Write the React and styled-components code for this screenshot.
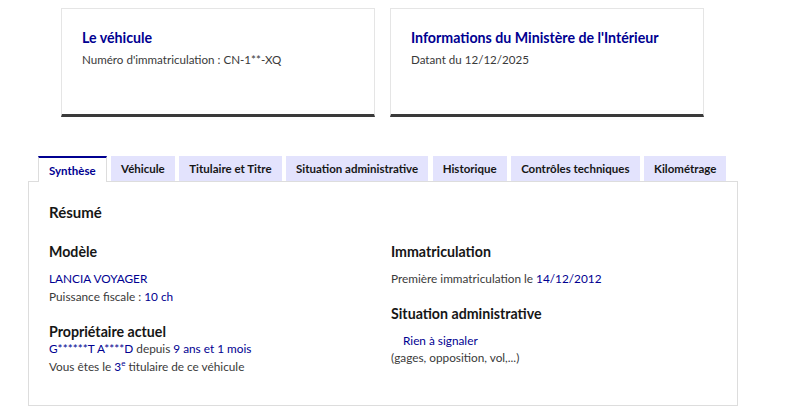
import React from "react";
import styled, { createGlobalStyle } from "styled-components";

const Global = createGlobalStyle`
  html, body { margin: 0; padding: 0; background: #fff; }
  body { font-family: Lato, "Noto Sans", Arial, sans-serif; color: #3a3a3a; }
  * { box-sizing: border-box; }
`;

const Page = styled.div`
  width: 800px;
  height: 415px;
  overflow: hidden;
  padding-top: 8px;
`;

const Cards = styled.div`
  display: flex;
  gap: 15px;
  margin-left: 61px;
`;

const Card = styled.div`
  width: 314px;
  height: 109px;
  border: 1px solid #e5e5e5;
  border-bottom: 3px solid #3a3a3a;
  padding: 18px 20px;
`;

const CardTitle = styled.div`
  color: #000091;
  font-weight: 700;
  font-size: 14.2px;
  line-height: 22px;
  margin-bottom: 2px;
  white-space: nowrap;
`;

const CardText = styled.div`
  font-size: 11.6px;
  line-height: 18px;
  color: #3a3a3a;
`;

const TabsArea = styled.div`
  margin-top: 39px;
  margin-left: 28px;
  width: 710px;
`;

const TabList = styled.div`
  display: flex;
  gap: 4.5px;
  padding-left: 10px;
`;

const Tab = styled.div`
  padding: 0 10px;
  display: flex;
  align-items: center;
  justify-content: center;
  font-size: 11.5px;
  font-weight: 700;
  white-space: nowrap;
  color: ${(p) => (p.$active ? "#000091" : "#161616")};
  background: ${(p) => (p.$active ? "#fff" : "#e3e3fd")};
  border-top: ${(p) => (p.$active ? "2px solid #000091" : "none")};
  border-left: ${(p) => (p.$active ? "1px solid #ddd" : "none")};
  border-right: ${(p) => (p.$active ? "1px solid #ddd" : "none")};
  margin-bottom: ${(p) => (p.$active ? "-1px" : "0")};
  position: relative;
  z-index: ${(p) => (p.$active ? 1 : 0)};
  height: ${(p) => (p.$active ? "26px" : "25px")};
`;

const Panel = styled.div`
  border: 1px solid #ddd;
  height: 225px;
  padding: 16px 20px;
`;

const PanelTitle = styled.div`
  font-size: 15px;
  font-weight: 700;
  color: #161616;
  line-height: 28px;
  margin-bottom: 16px;
`;

const Columns = styled.div`
  display: grid;
  grid-template-columns: 1fr 1fr;
  column-gap: 16px;
`;

const Col = styled.div`
  display: flex;
  flex-direction: column;
`;

const Heading = styled.div`
  font-size: 14.2px;
  font-weight: 700;
  color: #161616;
  line-height: 20px;
  margin-top: ${(p) => p.$mt || 0}px;
  margin-bottom: ${(p) => p.$mb || 0}px;
`;

const Line = styled.div`
  font-size: 11.8px;
  line-height: 17.5px;
  color: #3a3a3a;
  padding-left: ${(p) => p.$indent || 0}px;
`;

const Blue = styled.span`
  color: #000091;
`;

const Sup = styled.sup`
  font-size: 8px;
  line-height: 0;
  color: #000091;
`;

const tabs = [
  "Synthèse",
  "Véhicule",
  "Titulaire et Titre",
  "Situation administrative",
  "Historique",
  "Contrôles techniques",
  "Kilométrage",
];

export default function App() {
  return (
    <Page>
      <Global />
      <Cards>
        <Card>
          <CardTitle>Le véhicule</CardTitle>
          <CardText>Numéro d'immatriculation : CN-1**-XQ</CardText>
        </Card>
        <Card>
          <CardTitle>Informations du Ministère de l'Intérieur</CardTitle>
          <CardText>Datant du 12/12/2025</CardText>
        </Card>
      </Cards>
      <TabsArea>
        <TabList>
          {tabs.map((t, i) => (
            <Tab key={t} $active={i === 0}>
              {t}
            </Tab>
          ))}
        </TabList>
        <Panel>
          <PanelTitle>Résumé</PanelTitle>
          <Columns>
            <Col>
              <Heading $mb={8}>Modèle</Heading>
              <Line>
                <Blue>LANCIA VOYAGER</Blue>
              </Line>
              <Line>
                Puissance fiscale : <Blue>10 ch</Blue>
              </Line>
              <Heading $mt={17} $mb={-2}>
                Propriétaire actuel
              </Heading>
              <Line>
                <Blue>G******T A****D</Blue> depuis <Blue>9 ans et 1 mois</Blue>
              </Line>
              <Line>
                Vous êtes le <Blue>3</Blue>
                <Sup>e</Sup> titulaire de ce véhicule
              </Line>
            </Col>
            <Col>
              <Heading $mb={8}>Immatriculation</Heading>
              <Line>
                Première immatriculation le <Blue>14/12/2012</Blue>
              </Line>
              <Heading $mt={16} $mb={8}>
                Situation administrative
              </Heading>
              <Line $indent={12}>
                <Blue>Rien à signaler</Blue>
              </Line>
              <Line>(gages, opposition, vol,...)</Line>
            </Col>
          </Columns>
        </Panel>
      </TabsArea>
    </Page>
  );
}
